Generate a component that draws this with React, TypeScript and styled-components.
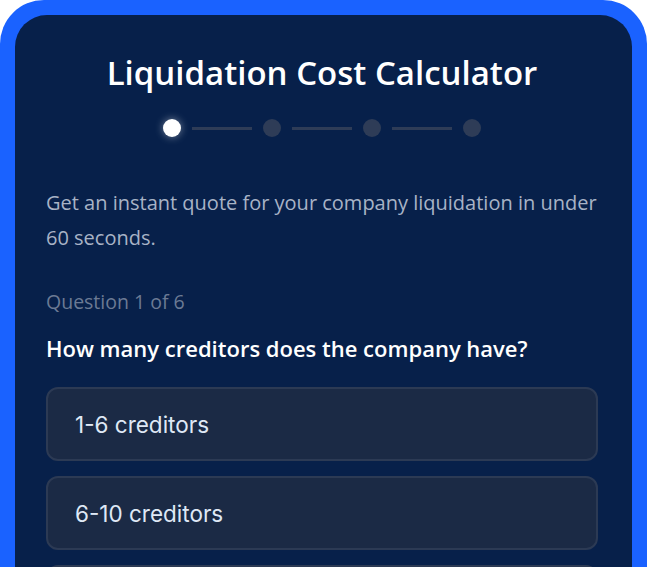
import React from "react";
import styled, { createGlobalStyle } from "styled-components";

const GlobalStyle = createGlobalStyle`
  html, body {
    margin: 0;
    padding: 0;
    background: #ffffff;
  }
  body {
    font-family: "Open Sans", "Noto Sans", sans-serif;
    overflow: hidden;
  }
`;

const STEPS = 4;
const OPTIONS = ["1-6 creditors", "6-10 creditors", "11-20 creditors"];

const App = () => {
  return (
    <>
      <GlobalStyle />
      <Frame>
        <Panel>
          <Title>Liquidation Cost Calculator</Title>
          <Stepper>
            {Array.from({ length: STEPS }).map((_, i) => (
              <React.Fragment key={i}>
                {i > 0 && <StepLine />}
                <StepDot active={i === 0} />
              </React.Fragment>
            ))}
          </Stepper>
          <Intro>
            Get an instant quote for your company liquidation in under 60
            seconds.
          </Intro>
          <Counter>Question 1 of 6</Counter>
          <Question>How many creditors does the company have?</Question>
          <Options>
            {OPTIONS.map((o) => (
              <Option key={o}>{o}</Option>
            ))}
          </Options>
        </Panel>
      </Frame>
    </>
  );
};

export default App;

const Frame = styled.div`
  box-sizing: border-box;
  width: 647px;
  min-height: 700px;
  padding: 15px;
  background: #1a62ff;
  border-radius: 44px;
`;

const Panel = styled.div`
  box-sizing: border-box;
  min-height: 670px;
  padding: 38px 34px 40px 31px;

  background: #07204a;
  border-radius: 32px;
`;

const Title = styled.h1`
  margin: 0;

  color: #ffffff;
  font-size: 33px;
  font-weight: 600;
  line-height: 40px;
  text-align: center;
`;

const Stepper = styled.div`
  display: flex;
  justify-content: center;
  align-items: center;
  gap: 11px;

  margin-top: 26px;
`;

const StepDot = styled.span<{ active?: boolean }>`
  width: 18px;
  height: 18px;

  background: ${({ active }) => (active ? "#ffffff" : "#2e3c57")};
  border-radius: 50%;
  box-shadow: ${({ active }) =>
    active ? "0 0 8px rgba(255, 255, 255, 0.45)" : "none"};
`;

const StepLine = styled.span`
  width: 60px;
  height: 3px;

  background: #2e3c57;
`;

const Intro = styled.p`
  margin: 48px 0 0;

  color: #a8b3c6;
  font-size: 20px;
  line-height: 35px;
`;

const Counter = styled.div`
  margin-top: 34px;

  color: #6b7a94;
  font-size: 19.5px;
  line-height: 26px;
`;

const Question = styled.h2`
  margin: 18px 0 0;

  color: #ffffff;
  font-size: 22px;
  font-weight: 600;
  line-height: 30px;
`;

const Options = styled.div`
  display: flex;
  flex-direction: column;
  gap: 15px;

  margin-top: 24px;
`;

const Option = styled.button`
  box-sizing: border-box;
  height: 74px;
  padding: 0 27px;

  background: #1b2a45;
  border: 2px solid #2c3a54;
  border-radius: 12px;

  color: #dfe8f5;
  font-family: Inter, sans-serif;
  font-size: 22.5px;
  text-align: left;
`;
